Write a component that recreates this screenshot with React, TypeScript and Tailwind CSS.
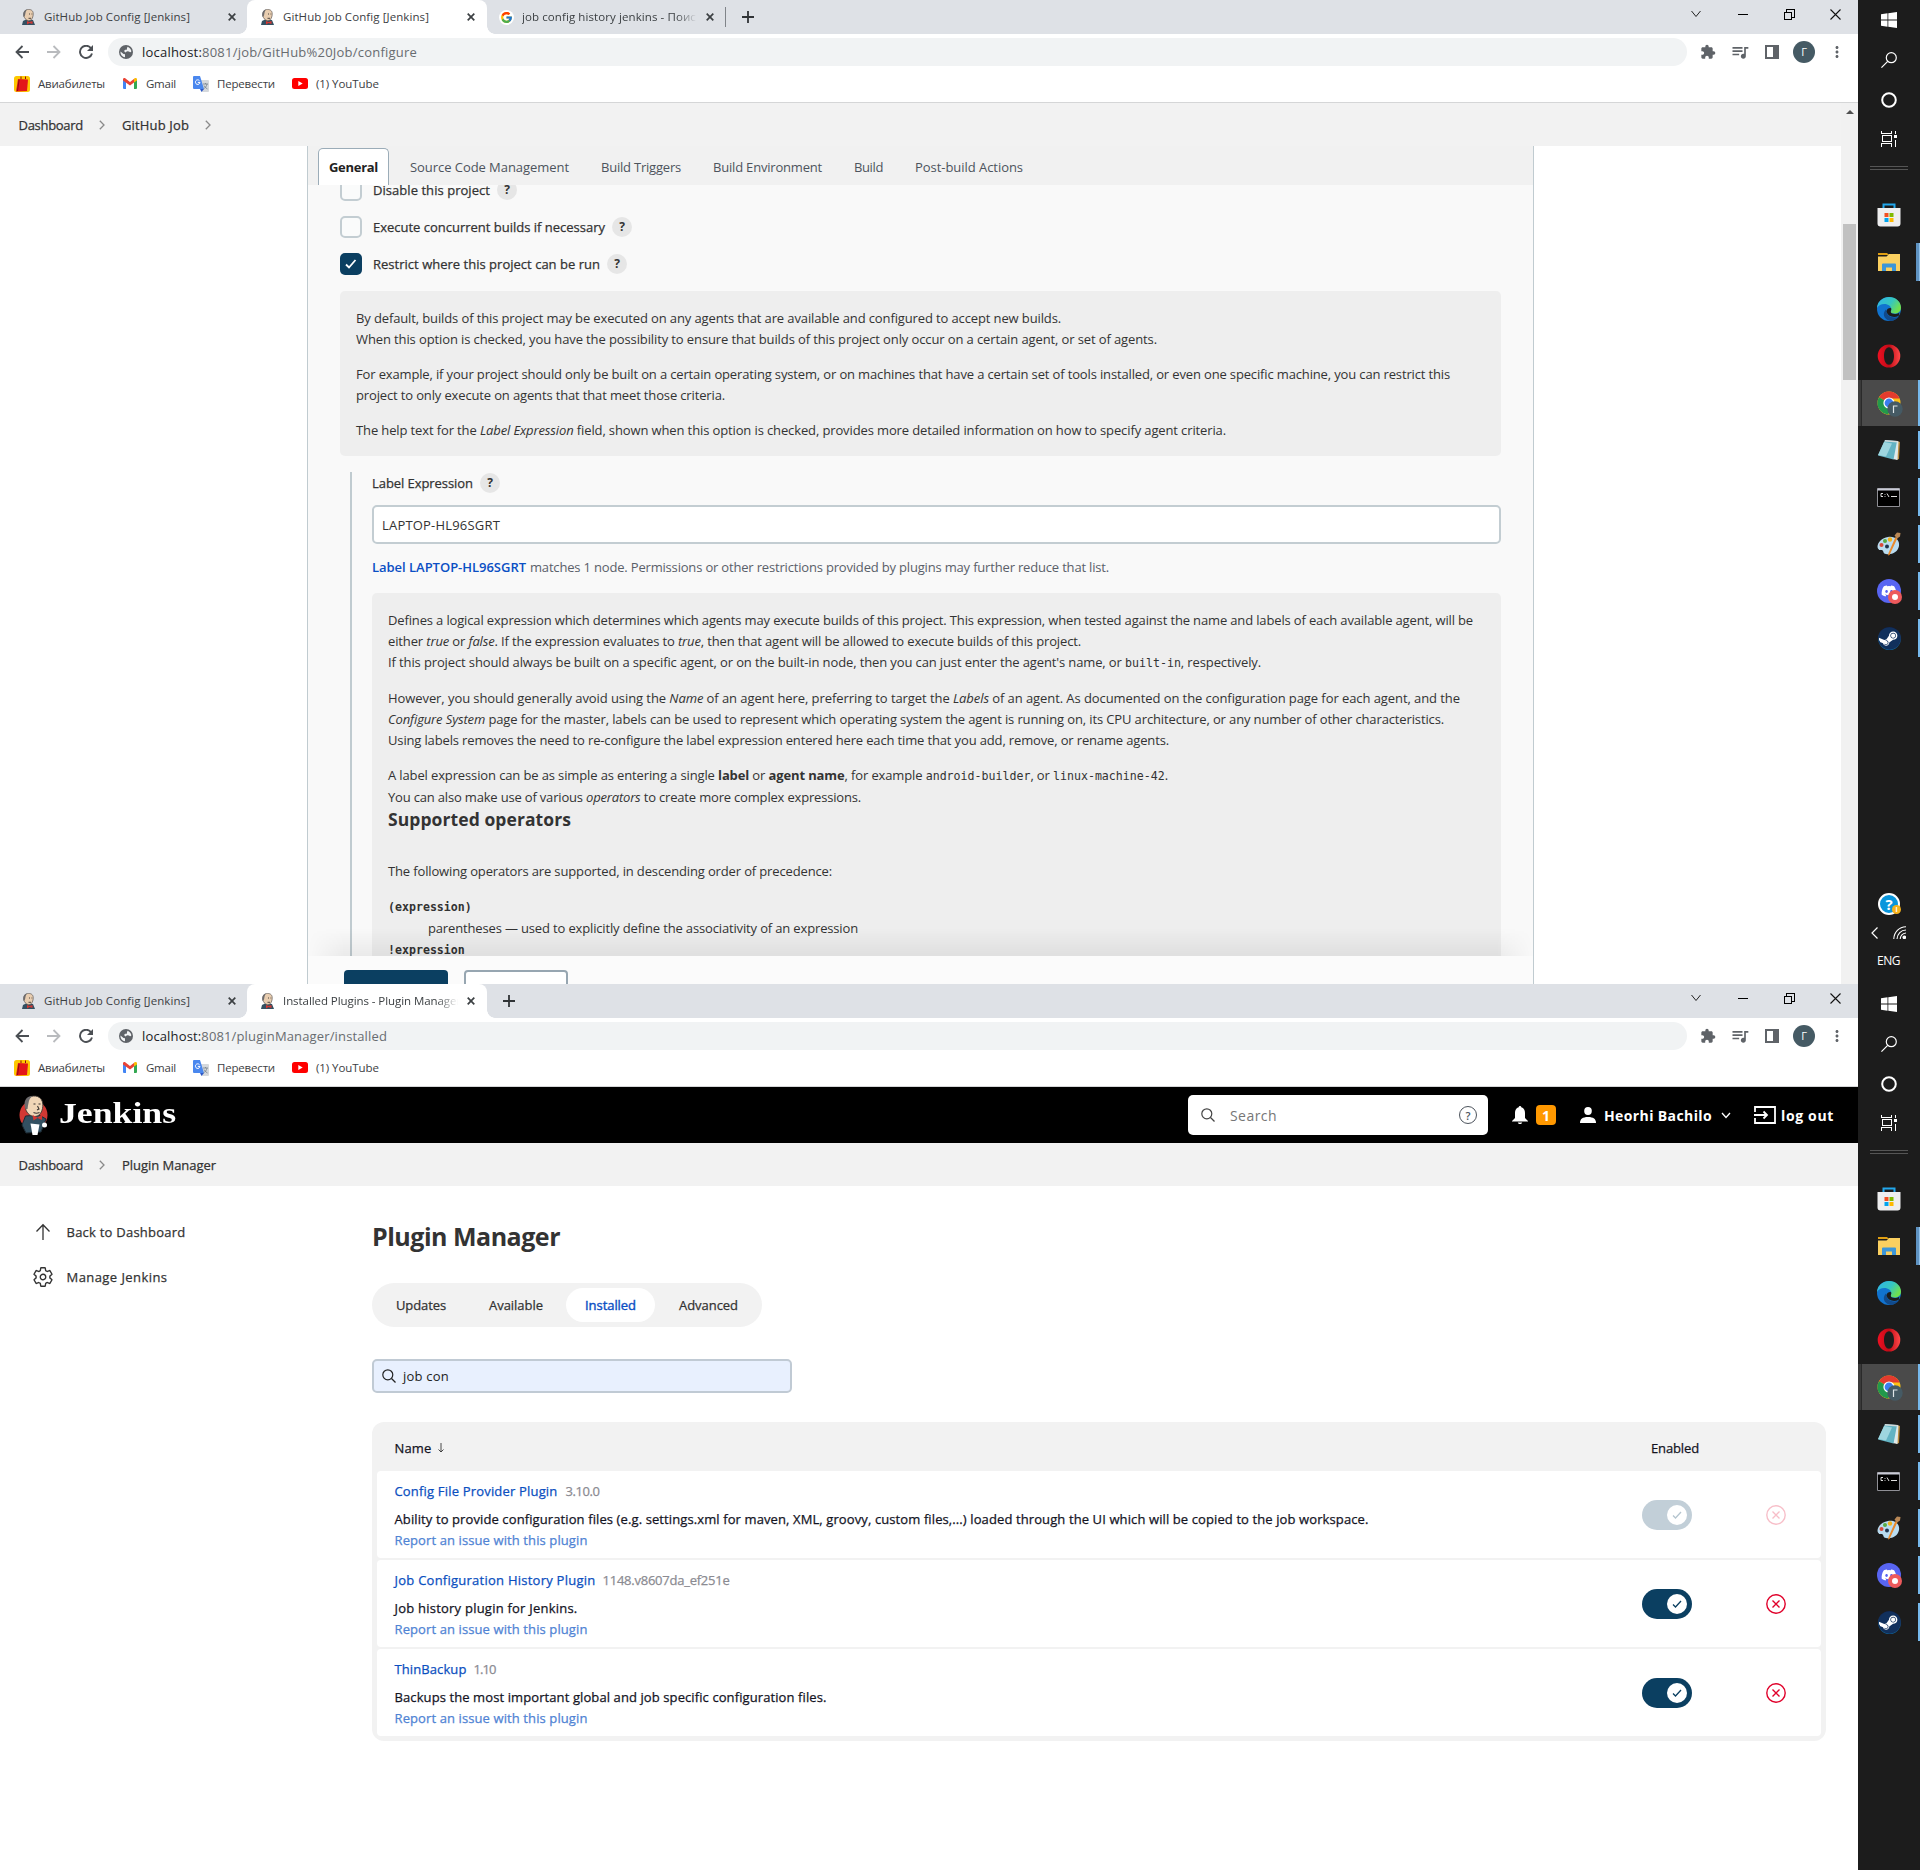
import { useLayoutEffect, useRef, useState, type ReactNode } from "react";
import { FcGoogle } from "react-icons/fc";
import { FaDiscord, FaSteam } from "react-icons/fa";
import { IoSettingsOutline } from "react-icons/io5";
import { MdExtension, MdQueueMusic, MdMoreVert } from "react-icons/md";

/* Single line of text tracked so that it fills the given width. Inline code keeps its own pitch. */
function Fit({ w, drop = false, className = "", children }: { w: number; drop?: boolean; className?: string; children: ReactNode }) {
  const ref = useRef<HTMLSpanElement>(null);
  const [spacing, setSpacing] = useState(0);
  useLayoutEffect(() => {
    const el = ref.current;
    if (!el) return;
    const natural = el.getBoundingClientRect().width;
    let count = el.textContent?.length ?? 0;
    el.querySelectorAll("code").forEach((c) => {
      count -= c.textContent?.length ?? 0;
    });
    setSpacing(count > 0 ? (w - natural) / count : 0);
  }, [w]);
  return (
    <span className={`inline-block shrink-0 whitespace-nowrap ${drop ? "pt-0.5" : ""} ${className}`} style={{ width: w }}>
      <span ref={ref} style={{ letterSpacing: spacing }}>
        {children}
      </span>
    </span>
  );
}

/* ---------- Icons ---------- */

function Butler({ className = "" }: { className?: string }) {
  return (
    <svg viewBox="0 0 28 40" className={className}>
      <ellipse cx="14" cy="20" rx="14" ry="14.500" fill="#d33833" />
      <path d="M6 21l-3.500 9 4 8 15-1 5-13-7-4z" fill="#335061" stroke="#1d2a33" strokeWidth="1" />
      <path d="M6 8C7 2 13 0 18 1.500c5 2 6 7 5 12-1 5-4 8-8 8-5 0-9-5-9-9z" fill="#f0d6b7" stroke="#3b3532" strokeWidth=".9" />
      <path d="M6 14C3.500 7 6 1 13 1 9 4 9.500 7 8.500 10.500L8 14z" fill="#6d6b6d" />
      <path d="M14 9h2M19 9h2M18 11l1.500 3-2 1M14 17.500c2 1 4 1 6 0" stroke="#3b3532" strokeWidth="1.100" fill="none" />
      <path d="M13 20l5 2.500 4.500-3v5.500l-4.500-2-4 2.500z" fill="#d33833" />
      <path d="M11 28.500l9 1-2 10.500h-5z" fill="#fff" />
      <circle cx="25" cy="30" r="2.500" fill="#fff" />
    </svg>
  );
}

function TabFavicon() {
  return (
    <svg viewBox="0 0 16 16" className="size-4 shrink-0">
      <path d="M2 16l1-4 4-2 6 1 2 5z" fill="#335061" />
      <path d="M4 4C5 .5 8 0 10.500 .7c3 1 3 4 2.500 6.300C12.500 10 10.500 12 8.500 11.700 6 11.500 4 8.500 4 7z" fill="#e8cdb0" stroke="#4a4340" strokeWidth=".6" />
      <path d="M3.500 8C2.500 4 4 1 7 .5 5.500 2 5.500 4 5 6.500z" fill="#6d6b6d" />
      <path d="M9 5h1M11.500 5h.8M8.500 9.300h2.500" stroke="#3b3532" strokeWidth=".9" />
      <path d="M7 12l2.500 1 3-1v3l-3-1L7 15.500z" fill="#d33833" />
    </svg>
  );
}

function CloseX({ className = "" }: { className?: string }) {
  return (
    <svg viewBox="0 0 8 8" className={`size-2 shrink-0 ${className}`}>
      <path d="M.7.7l6.600 6.600M7.300.7L.7 7.300" stroke="#3c4043" strokeWidth="1.700" />
    </svg>
  );
}

function Chevron() {
  return (
    <svg viewBox="0 0 6 10" className="ml-4 mr-[17px] h-2.5 w-1.5 shrink-0">
      <path d="M.8.8L5 5 .8 9.200" fill="none" stroke="#8a8a8a" strokeWidth="1.300" />
    </svg>
  );
}

function Magnifier({ className = "" }: { className?: string }) {
  return (
    <svg viewBox="0 0 14 14" className={`shrink-0 ${className}`} fill="none" stroke="currentColor" strokeWidth="1.200">
      <circle cx="5.800" cy="5.800" r="5" />
      <path d="M9.500 9.500l4 4" />
    </svg>
  );
}

function Help() {
  return (
    <span className="flex size-5 shrink-0 items-center justify-center rounded-full bg-[#e6e6e6] text-[12px] font-bold leading-none text-[#333]">
      ?
    </span>
  );
}

/* ---------- Browser chrome ---------- */

function ActiveTab({ children }: { children: ReactNode }) {
  return (
    <div className="relative flex h-[34px] w-[240px] shrink-0 items-center rounded-t-lg bg-white pl-3">
      <span className="absolute -left-2 bottom-0 size-2 bg-[radial-gradient(circle_at_0_0,#dee1e6_7.5px,#fff_8px)]" />
      <span className="absolute -right-2 bottom-0 size-2 bg-[radial-gradient(circle_at_100%_0,#dee1e6_7.5px,#fff_8px)]" />
      {children}
    </div>
  );
}

const fade = "overflow-hidden [mask-image:linear-gradient(to_right,#000_88%,transparent)]";
const tabText = "text-[11.5px] leading-4 text-[#3c4043]";
const medium = "font-medium [-webkit-text-stroke:0.25px]";

function Plus({ className = "" }: { className?: string }) {
  return (
    <svg viewBox="0 0 12 12" className={`size-3 shrink-0 ${className}`}>
      <path d="M6 0v12M0 6h12" stroke="#303336" strokeWidth="1.800" />
    </svg>
  );
}

function WindowControls() {
  return (
    <div className="ml-auto mr-[17px] flex h-7 items-center">
      <svg viewBox="0 0 10 10" className="mr-[37px] size-2.5">
        <path d="M.5 2L5 7.500 9.500 2" fill="none" stroke="#222" strokeWidth="1" />
      </svg>
      <span className="mr-9 h-px w-2.5 bg-black" />
      <svg viewBox="0 0 11 11" className="mr-[35px] size-[11px]" shapeRendering="crispEdges">
        <path d="M.5 3.500h7v7h-7zM2.500 3V.5h8v8H8" fill="none" stroke="#000" />
      </svg>
      <svg viewBox="0 0 11 11" className="size-[11px]">
        <path d="M.5.5l10 10M10.500.5l-10 10" stroke="#111" strokeWidth="1.100" />
      </svg>
    </div>
  );
}

function Toolbar({ path, width }: { path: string; width: number }) {
  return (
    <div className="flex h-9 shrink-0 items-center bg-white">
      <svg viewBox="0 0 14 14" className="ml-[15px] size-3.5 shrink-0">
        <path d="M14 7H1.500M7.500 1L1.500 7l6 6" fill="none" stroke="#4b4f54" strokeWidth="1.800" />
      </svg>
      <svg viewBox="0 0 14 14" className="ml-[18px] size-3.5 shrink-0">
        <path d="M0 7h12.500M6.500 1l6 6-6 6" fill="none" stroke="#b9bbbe" strokeWidth="1.800" />
      </svg>
      <svg viewBox="0 0 14 14" className="ml-[18px] size-3.5 shrink-0">
        <path d="M12 3.200A6.100 6.100 0 1 0 13 8.500" fill="none" stroke="#4b4f54" strokeWidth="1.900" />
        <path d="M14 0v6H8z" fill="#4b4f54" />
      </svg>
      <div className="ml-[15px] flex h-7 w-[1579px] shrink-0 items-center rounded-full bg-[#f1f3f4] pl-[11px]">
        <svg viewBox="0 0 14 14" className="size-3.5 shrink-0">
          <circle cx="7" cy="7" r="7" fill="#5f6368" />
          <path d="M1.500 6.500l3 2.500 1.500.3v2.900C3.300 12 1.300 9.500 1.500 6.500zM8.500 1.800c2 .6 3.500 2.500 3.900 4.500-.7 1.500-1.800 1.200-2.300.2L8 6.200 6.500 7.500 5 6l1.200-1.300h1.600L8 3.300z" fill="#f1f3f4" />
        </svg>
        <Fit w={width} drop className="ml-[9px] text-[13px] text-[#686c70]">
          <span className="text-[#202124]">localhost:</span>
          {path}
        </Fit>
      </div>
      <MdExtension className="ml-[13px] size-4 shrink-0 text-[#5f6368]" />
      <MdQueueMusic className="ml-[14px] size-5 shrink-0 text-[#5f6368]" />
      <svg viewBox="0 0 14 14" className="ml-[15px] size-3.5 shrink-0">
        <path d="M0 0h14v14H0zM2 2v10h6V2z" fillRule="evenodd" fill="#5f6368" />
      </svg>
      <span className="ml-[14px] flex size-[22px] shrink-0 items-center justify-center rounded-full bg-[#455a64] text-[11px] text-white">
        Г
      </span>
      <MdMoreVert className="ml-[13px] size-[18px] shrink-0 text-[#5f6368]" />
    </div>
  );
}

function Bookmarks() {
  return (
    <div className="flex h-[33px] shrink-0 items-center border-b border-[#d5d6d7] bg-white pb-[5px] text-[11.5px] text-[#3c4043]">
      <svg viewBox="0 0 16 16" className="ml-3.5 size-4 shrink-0">
        <rect width="16" height="16" rx="2.500" fill="#fdc800" />
        <path d="M4 3l10 .5-1 11.500-11 .5z" fill="#e3151a" />
        <path d="M7 3V.5M11.500 3V.5M5 4L3.500 15" stroke="#8d0d10" strokeWidth="1" />
      </svg>
      <Fit w={67} className="ml-2">Авиабилеты</Fit>
      <svg viewBox="0 0 14 11" className="ml-[18px] h-[11px] w-3.5 shrink-0">
        <path d="M0 1.500h3V11H1a1 1 0 0 1-1-1z" fill="#4285f4" />
        <path d="M11 1.500h3V10a1 1 0 0 1-1 1h-2z" fill="#34a853" />
        <path d="M0 1.500C0 0 1.500-.4 2.500.4L7 4 11.500.4l-.5 4L7 7.500 0 2.500z" fill="#ea4335" />
        <path d="M14 1.500c0-1.500-1.500-1.900-2.500-1.100L11 .8v3.700l3-2z" fill="#fbbc04" />
      </svg>
      <Fit w={30} className="ml-[9px]">Gmail</Fit>
      <svg viewBox="0 0 16 16" className="ml-[17px] size-4 shrink-0">
        <path d="M6 4h9a1 1 0 0 1 1 1v10a1 1 0 0 1-1 1H9z" fill="#d5d8dc" />
        <path d="M1 0h6l4 13H1a1 1 0 0 1-1-1V1a1 1 0 0 1 1-1z" fill="#4a87ee" />
        <path d="M7 13h4l-2.500 3z" fill="#2a56c6" />
        <path d="M6.500 4.700A2.300 2.300 0 1 0 7 6.400H4.800" stroke="#fff" fill="none" strokeWidth="1" />
        <path d="M10 8h5M12.500 7v1M14 8c-.5 2.500-2 4-3.500 5M11 9.500c.8 1.500 2 2.800 3.500 3.500" stroke="#74808a" fill="none" strokeWidth=".8" />
      </svg>
      <Fit w={58} className="ml-2">Перевести</Fit>
      <svg viewBox="0 0 16 11" className="ml-[17px] h-[11px] w-4 shrink-0">
        <rect width="16" height="11" rx="2.500" fill="#f00" />
        <path d="M6.300 3l4.400 2.500L6.300 8z" fill="#fff" />
      </svg>
      <Fit w={63} className="ml-2">(1) YouTube</Fit>
    </div>
  );
}

/* ---------- Taskbar ---------- */

function Slot({ children, accent = true }: { children: ReactNode; accent?: boolean }) {
  return (
    <div className="flex h-[47px] w-full shrink-0 items-center justify-between pb-px">
      <span className="w-[2px]" />
      {children}
      <span className={accent ? "h-[38px] w-[2px] bg-[#76b9ed]" : "w-[2px]"} />
    </div>
  );
}

function Taskbar({ tray = false }: { tray?: boolean }) {
  return (
    <div className="flex w-[62px] shrink-0 flex-col items-center bg-[#1c1c1c]">
      <svg viewBox="0 0 16 16" className="mt-3 size-4 shrink-0" fill="#fff">
        <path d="M0 2.200L6.500 1.300v6.200H0zM7.300 1.200L16 0v7.500H7.300zM0 8.400h6.500v6.300L0 13.800zM7.300 8.400H16V16l-8.700-1.200z" />
      </svg>
      <svg viewBox="0 0 16 16" className="mt-6 size-4 shrink-0" fill="none" stroke="#fff" strokeWidth="1.200">
        <circle cx="10.300" cy="5.700" r="5" />
        <path d="M6.700 9.300L.4 15.600" />
      </svg>
      <svg viewBox="0 0 16 16" className="mt-6 size-4 shrink-0">
        <circle cx="8" cy="8" r="6.800" fill="none" stroke="#fff" strokeWidth="2" />
      </svg>
      <svg viewBox="0 0 16 16" className="mt-[23px] size-4 shrink-0" fill="none" stroke="#fff" shapeRendering="crispEdges">
        <path d="M.5 0v2.500h10V0M.5 16v-3.500h10V16M1 4.500h9v6H1zM14.500 0v3M14.500 9v7" />
        <path d="M13 4h3v3h-3z" fill="#fff" stroke="none" />
      </svg>
      <span className="mt-[19px] h-1 w-[38px] shrink-0 border-y border-[#555]" />
      <div className="mt-[22px] flex w-full flex-col">
        <Slot accent={false}>
          <svg viewBox="0 0 24 24" className="size-6">
            <path d="M6.500 6V1.500h11V6" fill="none" stroke="#22a7ec" strokeWidth="2" />
            <path d="M.5 5h23v15.500a3 3 0 0 1-3 3h-17a3 3 0 0 1-3-3z" fill="#eeeeef" />
            <path d="M7.500 10h4v4h-4z" fill="#f25022" />
            <path d="M12.500 10h4v4h-4z" fill="#7fba00" />
            <path d="M7.500 15h4v4h-4z" fill="#00a4ef" />
            <path d="M12.500 15h4v4h-4z" fill="#ffb900" />
          </svg>
        </Slot>
        <div className="flex h-[47px] w-full items-center justify-between pb-px">
          <span className="w-1" />
          <svg viewBox="0 0 22 18" className="h-[18px] w-[22px]">
            <path d="M0 0h9l2 2H0z" fill="#e09f12" />
            <path d="M0 3.500h8.500L11 1h11v17H0z" fill="#fbd060" />
            <path d="M4 18v-6.500a1 1 0 0 1 1-1h12a1 1 0 0 1 1 1V18h-4v-3.500H8V18z" fill="#3d96d8" />
          </svg>
          <span className="h-[38px] w-1 border-r border-[#8fc0ea] bg-[#5f93c2]" />
        </div>
        <Slot accent={false}>
          <svg viewBox="0 0 24 24" className="size-6">
            <defs>
              <linearGradient id="edgeTop" x1="0" y1="0" x2="1" y2=".5">
                <stop offset="0" stopColor="#2fb4e9" />
                <stop offset=".6" stopColor="#36c6c0" />
                <stop offset="1" stopColor="#6fe04f" />
              </linearGradient>
            </defs>
            <circle cx="12" cy="12" r="12" fill="#1173cf" />
            <path d="M0 11C.5 4 6 0 12 0c7 0 12 5 12 10.500 0 4-3 6-6.500 6-3 0-4-1-4-2 0-.7.800-1 .800-2.500 0-2.500-3-5-7-5C4 7 1.500 8.500 0 11z" fill="url(#edgeTop)" />
            <path d="M9 12.500c0 5 4 8 8.500 8 1.500 0 3-.3 4.500-1A12 12 0 0 1 14 24C8 23 5.500 18.500 7.500 14.500 8 13.500 8.500 13 9 12.500z" fill="#114a8b" />
            <path d="M13.800 14.300c-.5 1.500 1.200 2.700 4 2.700 1.500 0 3.200-.4 4.600-1.500l-.6 3.300c-5 2.700-11.600.5-12.400-4.500.3-3 4.800-4.300 4.900-2.300 0 1-.3 1.600-.5 2.300z" fill="#1c1c1c" />
          </svg>
        </Slot>
        <Slot accent={false}>
          <svg viewBox="0 0 24 24" className="size-6">
            <defs>
              <linearGradient id="operaRing" x1="0" y1="0" x2="1" y2="0">
                <stop offset="0" stopColor="#ee1022" />
                <stop offset=".5" stopColor="#c00a16" />
                <stop offset="1" stopColor="#ff4a4a" />
              </linearGradient>
            </defs>
            <path d="M12 .5a11.300 11.500 0 1 1 0 23 11.300 11.500 0 0 1 0-23zM12 3.200C9 3.200 7 7 7 12s2 8.800 5 8.800 5-3.800 5-8.800-2-8.800-5-8.800z" fillRule="evenodd" fill="url(#operaRing)" />
          </svg>
        </Slot>
        <div className="flex h-[47px] w-full shrink-0 items-center pb-px">
          <span className="h-[46px] w-1 border-r border-[#2a2a2a] bg-[#3a3a3a]" />
          <span className="flex h-[46px] w-14 items-center justify-center bg-[#4a4a4a] pt-px">
            <svg viewBox="0 0 26 26" className="size-[26px]">
              <circle cx="12" cy="12" r="11.500" fill="#fbc116" />
              <path d="M12 12L2 6.200A11.500 11.500 0 0 1 22.500 7.500H12z" fill="#e33b2e" />
              <path d="M12 12L2 6.200A11.500 11.500 0 0 0 11 23.500L16 15z" fill="#22994b" />
              <circle cx="12" cy="12" r="5.600" fill="#fff" />
              <circle cx="12" cy="12" r="4.400" fill="#3b7ded" />
              <circle cx="18" cy="18" r="7.700" fill="#455a64" />
              <path d="M16.500 22v-7h4" fill="none" stroke="#dfe5e8" strokeWidth="1.200" />
            </svg>
          </span>
          <span className="h-[46px] w-[2px] bg-[#76b9ed]" />
        </div>
        <Slot>
          <svg viewBox="0 0 22 22" className="size-[22px]">
            <path d="M19 2l3 1-1 17-3 1z" fill="#b98a3c" />
            <path d="M17 2l3.500.5L19.500 21l-5-1z" fill="#dfe9ea" />
            <path d="M7 1l12 1-3.500 18.500L0 16.500z" fill="#63b3c3" />
            <path d="M6 3l8 1.500L8 17.500l-8-1.500z" fill="#9ed6df" />
            <path d="M7 1l13 1v1.500L6.500 2.500z" fill="#d3dadb" />
          </svg>
        </Slot>
        <Slot>
          <svg viewBox="0 0 23 19" className="mr-px h-[19px] w-[23px]">
            <path d="M.5.5h22v18H.5z" fill="#000" stroke="#8f8f95" />
            <path d="M.5.5h22V2.500H.5z" fill="#c9cbd6" />
            <path d="M6 5.500H4v3h2M8 6v.8M8 8v.8M10 5.500l2 3.500M14 8.500h6" stroke="#ddd" fill="none" strokeWidth="1" />
          </svg>
        </Slot>
        <Slot>
          <svg viewBox="0 0 24 24" className="size-6">
            <path d="M11 5C18 4 23 8 22 14c-1 6-7 9-13 8-3 0-2-3-4-4-2 0-4 0-4.500-3C.5 10 5 6 11 5z" fill="#b9dcf0" />
            <circle cx="4.500" cy="13" r="2" fill="#d94a3a" />
            <circle cx="8" cy="9" r="2" fill="#58ab43" />
            <circle cx="13" cy="7.500" r="2.200" fill="#f2b21b" />
            <circle cx="10" cy="14.500" r="2" fill="#1f3550" />
            <path d="M18.500 5l2 1L12.500 23l-1.500.5.500-2.500z" fill="#e98a2c" />
            <path d="M17.500 3.500L20 .5l3.500.5-.5 3.500-3 2z" fill="#b98856" />
          </svg>
        </Slot>
        <Slot>
          <span className="relative flex size-6 items-center justify-center rounded-full bg-[#5865f2]">
            <FaDiscord className="size-4 text-white" />
            <span className="absolute -bottom-px -right-px flex size-3.5 items-center justify-center rounded-full bg-[#ed5a5c]">
              <span className="size-1.5 rounded-full bg-white" />
            </span>
          </span>
        </Slot>
        <Slot>
          <span className="flex size-[23px] items-center justify-center rounded-full bg-gradient-to-b from-[#131a3c] to-[#0e6ea8]">
            <FaSteam className="size-[23px] text-[#11305c] [background:radial-gradient(circle,#fff_62%,transparent_64%)]" />
          </span>
        </Slot>
      </div>
      {tray && (
        <div className="mt-auto flex h-[91px] w-full flex-col items-center">
          <span className="relative flex size-[22px] items-center justify-center rounded-full border-2 border-white bg-[#0a96dc] text-[15px] font-bold leading-none text-white">
            ?
            <span className="absolute -bottom-px -right-[3px] flex size-[9px] items-center justify-center rounded-full bg-[#f7b21a] text-[7px] leading-none">
              i
            </span>
          </span>
          <div className="mt-[11px] flex w-full items-center pl-[13px]">
            <svg viewBox="0 0 7 12" className="h-3 w-[7px]">
              <path d="M6.500.5L1 6l5.500 5.500" fill="none" stroke="#fff" strokeWidth="1.200" />
            </svg>
            <svg viewBox="0 0 13 13" className="ml-[15px] size-[13px]" fill="none" stroke="#fff" strokeWidth="1.100">
              <path d="M.8 13C1 6 6 1 13 .8M4 13c.3-5 4-9 9-9M7.200 13C7.500 9.500 9.500 7.500 13 7" />
              <circle cx="11.300" cy="11.300" r="1.300" fill="#fff" />
            </svg>
          </div>
          <Fit w={23} className="mr-px mt-[14px] text-[12px] leading-4 text-white">ENG</Fit>
        </div>
      )}
    </div>
  );
}

/* ---------- Job configuration page ---------- */

const configTabs: [string, number, string][] = [
  ["Source Code Management", 159, "ml-[21px]"],
  ["Build Triggers", 80, "ml-8"],
  ["Build Environment", 109, "ml-8"],
  ["Build", 29, "ml-8"],
  ["Post-build Actions", 108, "ml-8"],
];

function Check({ label, w, checked = false }: { label: string; w: number; checked?: boolean }) {
  return (
    <div className="flex h-[37px] shrink-0 items-center">
      {checked ? (
        <span className="flex size-[22px] items-center justify-center rounded-[5px] bg-[#0b3f61]">
          <svg viewBox="0 0 12 10" className="h-2.5 w-3">
            <path d="M1 5.500l3 3L10.500 1" fill="none" stroke="#fff" strokeWidth="1.800" />
          </svg>
        </span>
      ) : (
        <span className="size-[22px] rounded-[5px] border-2 border-[#c3cdd2] bg-[#fafbfb]" />
      )}
      <Fit w={w} drop className={`ml-[11px] mr-[7px] text-[#333] ${medium}`}>{label}</Fit>
      <Help />
    </div>
  );
}

function Line({ w, className = "h-[21px]", children }: { w: number; className?: string; children: ReactNode }) {
  return (
    <div className={`shrink-0 leading-[21px] ${className}`}>
      <Fit w={w}>{children}</Fit>
    </div>
  );
}

const Code = ({ children }: { children: ReactNode }) => (
  <code className="font-['DejaVu_Sans_Mono',monospace] text-[11.6px] tracking-normal">{children}</code>
);

function ConfigPage() {
  return (
    <div className="flex min-h-0 flex-1 bg-white">
      <div className="flex min-w-0 flex-1 flex-col">
        <div className={`flex h-[43px] shrink-0 items-center bg-[#f2f2f2] pl-[18.5px] text-[#333] ${medium}`}>
          <Fit w={64.5} drop>Dashboard</Fit>
          <Chevron />
          <Fit w={67} drop>GitHub Job</Fit>
          <Chevron />
        </div>
        <div className="ml-[307px] flex min-h-0 w-[1227px] flex-1 flex-col overflow-hidden border-x border-[#c0cbd0] bg-[#f9f9f9]">
          <div className="flex h-[39px] shrink-0 items-end bg-[#f1f1f1] pl-[10px] text-[#4d545d]">
            <div className="flex h-[37px] w-[71px] items-center justify-center rounded-t-[5px] border border-b-0 border-[#9bacb8] bg-white">
              <Fit w={49} drop className="font-bold text-[#222]">General</Fit>
            </div>
            {configTabs.map(([label, w, gap]) => (
              <span key={label} className={`flex h-[37px] items-center ${gap}`}>
                <Fit w={w} drop>{label}</Fit>
              </span>
            ))}
          </div>
          <div className="flex h-[771px] shrink-0 flex-col overflow-hidden pl-8 text-[#333]">
            <div className="-mt-[14px] flex flex-col">
              <Check label="Disable this project" w={117} />
              <Check label="Execute concurrent builds if necessary" w={232} />
              <Check label="Restrict where this project can be run" w={227} checked />
            </div>
            <div className="mt-[9px] flex h-[165px] w-[1161px] shrink-0 flex-col rounded-[5px] bg-[#eeeeee] pl-4 pt-[17px]">
              <Line w={705}>By default, builds of this project may be executed on any agents that are available and configured to accept new builds.</Line>
              <Line w={801}>When this option is checked, you have the possibility to ensure that builds of this project only occur on a certain agent, or set of agents.</Line>
              <Line w={1094} className="mt-3.5 h-[21px]">For example, if your project should only be built on a certain operating system, or on machines that have a certain set of tools installed, or even one specific machine, you can restrict this</Line>
              <Line w={369}>project to only execute on agents that that meet those criteria.</Line>
              <Line w={870} className="mt-3.5 h-[21px]">The help text for the <i>Label Expression</i> field, shown when this option is checked, provides more detailed information on how to specify agent criteria.</Line>
            </div>
            <div className="ml-[10px] mt-4 flex h-[600px] w-[1151px] shrink-0 flex-col border-l-2 border-[#c0cbd0] pl-5">
              <div className="flex h-[22px] shrink-0 items-center">
                <Fit w={101} drop className={`mr-[7px] ${medium}`}>Label Expression</Fit>
                <Help />
              </div>
              <div className="mt-[11px] flex h-[39px] w-[1129px] shrink-0 items-center rounded-[5px] border-2 border-[#c3cdd2] bg-white pl-2">
                <Fit w={118} drop>LAPTOP-HL96SGRT</Fit>
              </div>
              <div className="mt-[13px] flex h-[21px] shrink-0 items-center text-[#5a6069]">
                <Fit w={154} className="mr-[4px] font-semibold text-[#0b4fc4]">Label LAPTOP-HL96SGRT</Fit>
                <Fit w={579}>matches 1 node. Permissions or other restrictions provided by plugins may further reduce that list.</Fit>
              </div>
              <div className="mt-[15px] flex h-[500px] w-[1129px] shrink-0 flex-col rounded-[5px] bg-[#eeeeee] pl-4 pt-[17px]">
                <Line w={1085}>Defines a logical expression which determines which agents may execute builds of this project. This expression, when tested against the name and labels of each available agent, will be</Line>
                <Line w={693}>either <i>true</i> or <i>false</i>. If the expression evaluates to <i>true</i>, then that agent will be allowed to execute builds of this project.</Line>
                <Line w={873}>If this project should always be built on a specific agent, or on the built-in node, then you can just enter the agent's name, or <Code>built-in</Code>, respectively.</Line>
                <Line w={1072} className="mt-[15px] h-[21px]">However, you should generally avoid using the <i>Name</i> of an agent here, preferring to target the <i>Labels</i> of an agent. As documented on the configuration page for each agent, and the</Line>
                <Line w={1056}><i>Configure System</i> page for the master, labels can be used to represent which operating system the agent is running on, its CPU architecture, or any number of other characteristics.</Line>
                <Line w={781}>Using labels removes the need to re-configure the label expression entered here each time that you add, remove, or rename agents.</Line>
                <Line w={780} className="mt-3.5 h-[22px]">A label expression can be as simple as entering a single <b>label</b> or <b>agent name</b>, for example <Code>android-builder</Code>, or <Code>linux-machine-42</Code>.</Line>
                <Line w={473}>You can also make use of various <i>operators</i> to create more complex expressions.</Line>
                <Line w={183} className="mt-px h-6 text-[17.5px] font-bold">Supported operators</Line>
                <Line w={444} className="mt-7 h-[21px]">The following operators are supported, in descending order of precedence:</Line>
                <Line w={84} className="mt-3.5 h-[22px] font-bold"><Code>(expression)</Code></Line>
                <Line w={430} className="h-[21px] pl-10">parentheses — used to explicitly define the associativity of an expression</Line>
                <Line w={77} className="h-[22px] font-bold"><Code>!expression</Code></Line>
              </div>
            </div>
          </div>
          <div className="relative flex h-7 shrink-0 items-start bg-[#fbfbfb] pl-9 pt-3.5">
            <span className="absolute inset-x-0 -top-7 h-7 bg-gradient-to-t from-black/6 to-transparent [mask-image:linear-gradient(to_right,transparent,#000_3%,#000_97%,transparent)]" />
            <span className="h-9 w-[104px] rounded-[4px] bg-[#0b3f61]" />
            <span className="ml-4 h-9 w-[104px] rounded-[4px] border-2 border-[#97a6b1] bg-white" />
          </div>
        </div>
      </div>
      <div className="flex w-[17px] shrink-0 flex-col items-center bg-[#f1f1f1]">
        <svg viewBox="0 0 8 4" className="mt-[7px] h-1 w-2">
          <path d="M4 0l4 4H0z" fill="#505050" />
        </svg>
        <span className="mt-[110px] h-[156px] w-[13px] bg-[#c1c1c1]" />
      </div>
    </div>
  );
}

/* ---------- Plugin manager page ---------- */

type Plugin = {
  name: string;
  nameW: number;
  version: string;
  versionW: number;
  gap: string;
  about: string;
  aboutW: number;
  locked?: boolean;
};

const plugins: Plugin[] = [
  {
    name: "Config File Provider Plugin",
    nameW: 163,
    version: "3.10.0",
    versionW: 34,
    gap: "ml-2",
    about: "Ability to provide configuration files (e.g. settings.xml for maven, XML, groovy, custom files,...) loaded through the UI which will be copied to the job workspace.",
    aboutW: 974,
    locked: true,
  },
  {
    name: "Job Configuration History Plugin",
    nameW: 201,
    version: "1148.v8607da_ef251e",
    versionW: 127,
    gap: "ml-[7px]",
    about: "Job history plugin for Jenkins.",
    aboutW: 183,
  },
  {
    name: "ThinBackup",
    nameW: 72,
    version: "1.10",
    versionW: 22,
    gap: "ml-[7px]",
    about: "Backups the most important global and job specific configuration files.",
    aboutW: 432,
  },
];

function PluginRow({ p }: { p: Plugin }) {
  return (
    <div className="flex h-[87px] items-center rounded-[4px] bg-white pl-[17.5px]">
      <div className={`flex w-[1247.5px] flex-col pt-0.5 leading-[21px] ${medium}`}>
        <div className="flex h-[21px] text-[#0b4fc0]">
          <Fit w={p.nameW}>{p.name}</Fit>
          <Fit w={p.versionW} className={`text-[#8b8b92] ${p.gap}`}>{p.version}</Fit>
        </div>
        <div className="mt-[7px] h-[21px] text-[#14141f]">
          <Fit w={p.aboutW}>{p.about}</Fit>
        </div>
        <div className="h-[21px] text-[#4f83d4]">
          <Fit w={193}>Report an issue with this plugin</Fit>
        </div>
      </div>
      <span className={`flex h-[30px] w-[50px] items-center justify-end rounded-full pr-[5px] ${p.locked ? "bg-[#c2cfd8] text-[#b5c5cf]" : "bg-[#0b3f61] text-[#0b3f61]"}`}>
        <span className="flex size-5 items-center justify-center rounded-full bg-white">
          <svg viewBox="0 0 10 8" className="h-2 w-2.5">
            <path d="M1 4.500L3.500 7 9 1" fill="none" stroke="currentColor" strokeWidth="1.300" />
          </svg>
        </span>
      </span>
      <svg viewBox="0 0 20 20" className={`ml-[74px] size-5 ${p.locked ? "opacity-25" : ""}`} fill="none" stroke="#e0002a" strokeWidth="1.400">
        <circle cx="10" cy="10" r="9.200" />
        <path d="M6.500 6.500l7 7M13.500 6.500l-7 7" />
      </svg>
    </div>
  );
}

function PluginPage() {
  return (
    <div className="flex min-h-0 flex-1 flex-col bg-white">
      <header className="flex h-14 shrink-0 items-center bg-black pl-[19px]">
        <Butler className="h-10 w-[29px]" />
        <span className="ml-[11px] flex w-[117px] pb-1 font-['Liberation_Serif',serif] text-[30px] font-bold leading-9 text-white">
          <span className="origin-left scale-x-[1.19]">Jenkins</span>
        </span>
        <div className="ml-[1012px] flex h-10 w-[300px] items-center rounded-[5px] bg-white pl-[13px]">
          <Magnifier className="size-3.5 text-[#444]" />
          <Fit w={47} className="ml-[15px] text-[14px] text-[#767676]">Search</Fit>
          <span className="ml-auto mr-[11px] flex size-[18px] items-center justify-center rounded-full border-[1.5px] border-[#4d545d] text-[11px] font-semibold leading-none text-[#4d545d]">?</span>
        </div>
        <svg viewBox="0 0 16 18" className="ml-6 h-[18px] w-4 shrink-0" fill="#fff">
          <path d="M8 0c.8 0 1.300.6 1.300 1.300C12 2 13 4.500 13 7v5l3 3v.5H0V15l3-3V7c0-2.500 1-5 3.700-5.700C6.700.6 7.200 0 8 0zM5.800 16.500h4.400C9.800 17.500 9 18 8 18s-1.800-.5-2.200-1.500z" />
        </svg>
        <span className="ml-2 flex h-5 w-5 items-center justify-center rounded-[4px] bg-[#ff9800] text-[14px] font-bold text-white">1</span>
        <svg viewBox="0 0 16 16" className="ml-6 size-4 shrink-0" fill="#fff">
          <ellipse cx="8" cy="4" rx="3.800" ry="4" />
          <path d="M0 16c0-4 2.500-6 8-6s8 2 8 6z" />
        </svg>
        <Fit w={108} className="ml-2 text-[14px] font-bold text-white">Heorhi Bachilo</Fit>
        <svg viewBox="0 0 10 7" className="ml-[9px] h-[7px] w-2.5 shrink-0">
          <path d="M1 1l4 4.500L9 1" fill="none" stroke="#fff" strokeWidth="1.300" />
        </svg>
        <svg viewBox="0 0 22 18" className="ml-[23px] h-[18px] w-[22px] shrink-0" fill="none" stroke="#fff" strokeWidth="1.800">
          <path d="M1 6V1h20v16H1v-5M0 9h13M9.500 5.500L13 9l-3.500 3.500" />
        </svg>
        <Fit w={53} className="ml-[5px] text-[14px] font-bold text-white">log out</Fit>
      </header>
      <div className={`flex h-[43px] shrink-0 items-center bg-[#f2f2f2] pl-[18.5px] text-[#333] ${medium}`}>
        <Fit w={64.5} drop>Dashboard</Fit>
        <Chevron />
        <Fit w={94} drop>Plugin Manager</Fit>
      </div>
      <div className="flex">
        <nav className={`flex w-[372px] shrink-0 flex-col pl-8 pt-[23px] text-[#333] ${medium}`}>
          <div className="flex h-[45px] items-center">
            <svg viewBox="0 0 22 22" className="size-[22px]" fill="none" stroke="#333" strokeWidth="1.300">
              <path d="M11 19V4M4.500 10.500L11 3.800l6.500 6.700" />
            </svg>
            <Fit w={119} drop className="ml-[12.5px]">Back to Dashboard</Fit>
          </div>
          <div className="flex h-[45px] items-center">
            <IoSettingsOutline className="size-[22px]" />
            <Fit w={101} drop className="ml-[12.5px]">Manage Jenkins</Fit>
          </div>
        </nav>
        <main className="flex w-[1454px] flex-col pt-[33px]">
          <h1 className="flex h-[37px] text-[25px] font-bold leading-[34px] text-[#333]">
            <Fit w={188}>Plugin Manager</Fit>
          </h1>
          <div className={`mt-[27px] flex h-11 w-[390px] items-center rounded-full bg-[#f2f2f2] pl-6 text-[#333] ${medium}`}>
            <Fit w={50} drop>Updates</Fit>
            <Fit w={54} drop className="ml-[43px]">Available</Fit>
            <span className="ml-[23px] flex h-[34px] w-[89px] items-center justify-center rounded-full bg-white text-[#0b4fc4] [-webkit-text-stroke:0.4px]">
              <Fit w={51} drop>Installed</Fit>
            </span>
            <Fit w={59} drop className="ml-6">Advanced</Fit>
          </div>
          <div className="mt-8 flex h-[34px] w-[420px] items-center rounded-[5px] border-2 border-[#c0cad4] bg-[#e8f0fe] pl-2">
            <Magnifier className="size-3.5 text-[#222]" />
            <Fit w={46} drop className="ml-[7px] text-[#222]">job con</Fit>
          </div>
          <div className="mt-[29px] flex h-[319px] flex-col gap-[2px] rounded-[12px] bg-[#f2f2f2] px-[5px] pb-[5px]">
            <div className={`flex h-[47px] items-center pl-[17.5px] pt-1 text-[#14141f] ${medium}`}>
              <Fit w={37} drop>Name</Fit>
              <svg viewBox="0 0 6 10" className="ml-[6.5px] h-2.5 w-1.5">
                <path d="M3 0v9M.5 6.500L3 9l2.500-2.500" fill="none" stroke="#333" strokeWidth=".9" />
              </svg>
              <Fit w={48} drop className="ml-[1207px]">Enabled</Fit>
            </div>
            {plugins.map((p) => (
              <PluginRow key={p.name} p={p} />
            ))}
          </div>
        </main>
      </div>
    </div>
  );
}

/* ---------- Screens ---------- */

const favTitle = (
  <>
    <TabFavicon />
    <Fit w={146} className={`ml-2 ${tabText}`}>GitHub Job Config [Jenkins]</Fit>
  </>
);

export default function App() {
  return (
    <div className="flex h-[1870px] w-[1922px] flex-col overflow-hidden bg-white font-['Open_Sans','Noto_Sans',sans-serif] text-[13px]">
      <section className="flex h-[984px] w-[1920px] shrink-0">
        <div className="flex w-[1858px] shrink-0 flex-col">
          <div className="flex h-[34px] shrink-0 items-start bg-[#dee1e6]">
            <div className="flex h-[34px] w-[247px] items-center pl-5">
              {favTitle}
              <CloseX className="ml-[38px]" />
            </div>
            <ActiveTab>
              {favTitle}
              <CloseX className="ml-[38px]" />
            </ActiveTab>
            <div className="flex h-[34px] items-center">
              <span className="ml-3 flex size-[15px] items-center justify-center rounded-full bg-white">
                <FcGoogle className="size-[13px]" />
              </span>
              <span className={`ml-2 flex w-[175px] ${fade}`}>
                <Fit w={180} className={tabText}>job config history jenkins - Поиск</Fit>
              </span>
              <CloseX className="ml-[9px]" />
              <span className="ml-[11px] h-5 w-px bg-[#808489]" />
              <Plus className="ml-4" />
            </div>
            <WindowControls />
          </div>
          <Toolbar path="8081/job/GitHub%20Job/configure" width={275} />
          <Bookmarks />
          <ConfigPage />
        </div>
        <Taskbar tray />
      </section>
      <section className="flex h-[886px] w-[1920px] shrink-0">
        <div className="flex w-[1858px] shrink-0 flex-col">
          <div className="flex h-[34px] shrink-0 items-start bg-[#dee1e6]">
            <div className="flex h-[34px] w-[247px] items-center pl-5">
              {favTitle}
              <CloseX className="ml-[38px]" />
            </div>
            <ActiveTab>
              <TabFavicon />
              <span className={`ml-2 flex w-[175px] ${fade}`}>
                <Fit w={178} className={tabText}>Installed Plugins - Plugin Manager</Fit>
              </span>
              <CloseX className="ml-[9px]" />
            </ActiveTab>
            <div className="flex h-[34px] items-center">
              <Plus className="ml-4" />
            </div>
            <WindowControls />
          </div>
          <Toolbar path="8081/pluginManager/installed" width={245} />
          <Bookmarks />
          <PluginPage />
        </div>
        <Taskbar />
      </section>
    </div>
  );
}
